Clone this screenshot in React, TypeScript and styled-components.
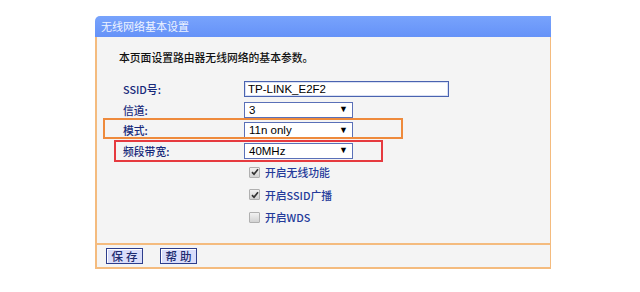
import * as React from 'react';
import styled, { createGlobalStyle } from 'styled-components';

const GlobalStyle = createGlobalStyle`
  html, body {
    margin: 0;
    padding: 0;
    background: #ffffff;
  }
  body {
    font-family: "Noto Sans CJK SC", "Liberation Sans", sans-serif;
  }
`;

const CJK = `"Noto Sans CJK SC", "Liberation Sans", sans-serif`;
const LATIN = `"Liberation Sans", Arial, "Noto Sans CJK SC", sans-serif`;
const EDGE = '#f4bb7e';

const Page = styled.div`
  padding: 16px 0 0 95px;
  width: 640px;
  height: 292px;
  box-sizing: border-box;
`;

const Panel = styled.div`
  width: 456px;
  display: flex;
  flex-direction: column;
`;

const Header = styled.div`
  height: 21px;
  line-height: 21px;
  padding-left: 6px;
  border-top-left-radius: 5px;
  background: linear-gradient(#78a3fc, #6592f8);
  color: #eef3ff;
  font-family: ${CJK};
  font-size: 11px;
`;

const Body = styled.div`
  height: 206px;
  box-sizing: border-box;
  padding: 12px 0 0 25px;
  background: #f4f4f4;
  border-left: 2px solid ${EDGE};
  border-right: 1px solid ${EDGE};
`;

const Intro = styled.div`
  margin-left: -3px;
  font-family: ${CJK};
  font-size: 10.8px;
  font-weight: 500;
  line-height: 16px;
  color: #111;
`;

const Form = styled.div`
  margin-top: 16px;
  display: flex;
  flex-direction: column;
`;

type Mark = { color: string; top: number; right: number; bottom: number; left: number };

const Row = styled.div<{ $mark?: Mark }>`
  position: relative;
  width: 231px;
  height: 16px;
  margin-bottom: 4.5px;
  display: grid;
  grid-template-columns: 122px 109px;
  align-items: center;

  &::after {
    content: '';
    display: ${(p) => (p.$mark ? 'block' : 'none')};
    position: absolute;
    top: ${(p) => (p.$mark ? p.$mark.top : 0)}px;
    right: ${(p) => (p.$mark ? p.$mark.right : 0)}px;
    bottom: ${(p) => (p.$mark ? p.$mark.bottom : 0)}px;
    left: ${(p) => (p.$mark ? p.$mark.left : 0)}px;
    border: 2px solid ${(p) => (p.$mark ? p.$mark.color : 'transparent')};
    pointer-events: none;
  }
`;

const Label = styled.span`
  font-family: ${CJK};
  font-size: 10.8px;
  font-weight: 500;
  color: #17297a;
  padding-left: 1px;
`;

const TextBox = styled.div`
  width: 205px;
  height: 16px;
  box-sizing: border-box;
  border: 1px solid #4a63b0;
  background: #ffffff;
  padding-left: 3px;
  font-family: ${LATIN};
  font-size: 11.5px;
  line-height: 14px;
  color: #000;
  box-shadow: inset 0 0 0 1px #d9e0f4;
`;

const SelectBox = styled.div`
  width: 109px;
  height: 16px;
  box-sizing: border-box;
  border: 1px solid #5a70b8;
  background: #ffffff;
  padding: 0 4px 0 4px;
  display: flex;
  align-items: center;
  justify-content: space-between;
  font-family: ${LATIN};
  font-size: 11.5px;
  color: #000;
`;

const Arrow = styled.span`
  font-size: 9px;
  color: #000;
  line-height: 1;
`;

const CheckList = styled.div`
  margin-top: -2px;
  padding-left: 127px;
  display: flex;
  flex-direction: column;
`;

const CheckRow = styled.label`
  height: 22.5px;
  display: flex;
  align-items: center;
  gap: 5px;
  font-family: ${CJK};
  font-size: 10.8px;
  font-weight: 500;
  color: #233a9a;
`;

const Box = styled.span`
  width: 9px;
  height: 9px;
  border: 1px solid #b0b0b0;
  border-radius: 1px;
  background: linear-gradient(#f2f2f2, #d2d2d2);
  display: flex;
  align-items: center;
  justify-content: center;
`;

const Footer = styled.div`
  display: flex;
  gap: 17px;
  padding: 3px 9px 3px 9px;
  background: #f4f4f4;
  border: 2px solid ${EDGE};
  border-right-width: 1px;
`;

const Button = styled.button`
  width: 37px;
  height: 16px;
  padding: 0;
  box-sizing: border-box;
  border: 1px solid #2d3d8c;
  background: #d9ddfa;
  box-shadow: inset 1px 1px 0 #ffffff;
  font-family: ${CJK};
  font-size: 11.5px;
  font-weight: 500;
  line-height: 14px;
  letter-spacing: 3px;
  text-indent: 3px;
  color: #1d2b70;
`;

const Check = ({ checked, children }: { checked?: boolean; children: React.ReactNode }) => (
  <CheckRow>
    <Box>
      {checked && (
        <svg width="8" height="8" viewBox="0 0 8 8">
          <path d="M1 4.2 L3 6.3 L7 1.2" fill="none" stroke="#333" strokeWidth="1.7" />
        </svg>
      )}
    </Box>
    {children}
  </CheckRow>
);

const ORANGE: Mark = { color: '#ee8a3c', top: -4, right: -50, bottom: -1, left: -19 };
const RED: Mark = { color: '#e63a3f', top: -2.5, right: -30, bottom: -3.5, left: -8 };

export default function App() {
  return (
    <>
      <GlobalStyle />
      <Page>
        <Panel>
          <Header>无线网络基本设置</Header>
          <Body>
            <Intro>本页面设置路由器无线网络的基本参数。</Intro>
            <Form>
              <Row>
                <Label>SSID号:</Label>
                <TextBox>TP-LINK_E2F2</TextBox>
              </Row>
              <Row>
                <Label>信道:</Label>
                <SelectBox>3<Arrow>▼</Arrow></SelectBox>
              </Row>
              <Row $mark={ORANGE}>
                <Label>模式:</Label>
                <SelectBox>11n only<Arrow>▼</Arrow></SelectBox>
              </Row>
              <Row $mark={RED}>
                <Label>频段带宽:</Label>
                <SelectBox>40MHz<Arrow>▼</Arrow></SelectBox>
              </Row>
            </Form>
            <CheckList>
              <Check checked>开启无线功能</Check>
              <Check checked>开启SSID广播</Check>
              <Check>开启WDS</Check>
            </CheckList>
          </Body>
          <Footer>
            <Button>保存</Button>
            <Button>帮助</Button>
          </Footer>
        </Panel>
      </Page>
    </>
  );
}
